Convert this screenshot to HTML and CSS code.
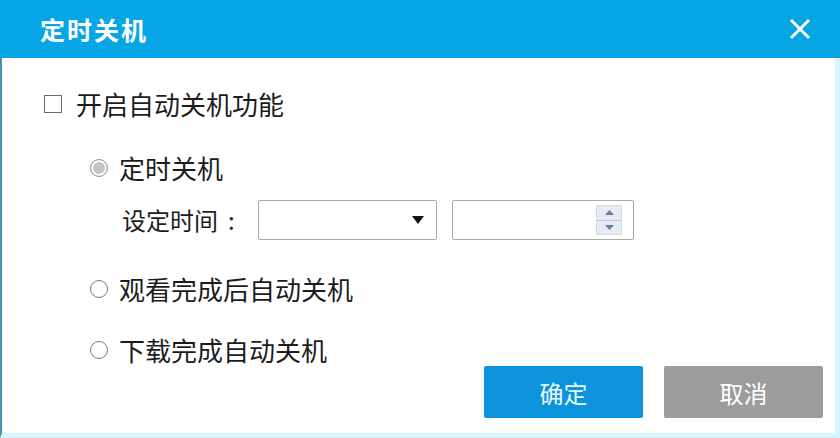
FILE: index.html
```html
<!DOCTYPE html>
<html lang="zh-CN">
<head>
<meta charset="utf-8">
<title>定时关机</title>
<link rel="stylesheet" href="styles.css">
</head>
<body>
<div class="dialog">
  <div class="header">
    <span class="title">定时关机</span>
    <svg class="close" width="24" height="22" viewBox="0 0 24 22"><path d="M3 2 L21 20 M21 2 L3 20" stroke="#fff" stroke-width="3" fill="none"/></svg>
  </div>
  <div class="body">
    <div class="options">
      <label class="row check-row"><span class="checkbox"></span><span>开启自动关机功能</span></label>
      <label class="row radio-row first"><span class="radio checked"></span><span>定时关机</span></label>
      <div class="row time-row">
        <span class="label">设定时间<span class="colon">:</span></span>
        <div class="select"><svg class="caret" width="12" height="8" viewBox="0 0 12 8"><path d="M0 0 H12 L6 8 Z" fill="#111"/></svg></div>
        <div class="spin">
          <div class="spin-btns">
            <div class="spin-btn"><svg width="9" height="5" viewBox="0 0 9 5"><path d="M0 5 H9 L4.5 0 Z" fill="#6c7a94"/></svg></div>
            <div class="spin-btn"><svg width="9" height="5" viewBox="0 0 9 5"><path d="M0 0 H9 L4.5 5 Z" fill="#6c7a94"/></svg></div>
          </div>
        </div>
      </div>
      <label class="row radio-row second"><span class="radio"></span><span>观看完成后自动关机</span></label>
      <label class="row radio-row third"><span class="radio"></span><span>下载完成自动关机</span></label>
    </div>
    <div class="buttons">
      <button class="btn ok">确定</button>
      <button class="btn cancel">取消</button>
    </div>
  </div>
</div>
</body>
</html>
```
FILE: styles.css
```css
html, body {
  margin: 0;
  padding: 0;
  background: #fff;
}
body {
  font-family: "Noto Sans CJK SC", "Noto Sans", sans-serif;
  color: #1c1c1c;
}
.dialog {
  width: 840px;
  height: 438px;
  display: flex;
  flex-direction: column;
  box-sizing: border-box;
  overflow: hidden;
}
.header {
  height: 58px;
  flex: none;
  background: #05a5e6;
  display: flex;
  align-items: center;
  justify-content: space-between;
  padding: 0 28px 0 40px;
}
.title {
  color: #fff;
  font-size: 25px;
  font-weight: bold;
  letter-spacing: 2px;
}
.close {
  display: block;
}
.body {
  flex: 1;
  display: grid;
  grid-template-columns: minmax(0, 1fr) auto;
  border-left: 2px solid #3f98ad;
  border-right: 5px solid #d4f6fc;
  border-bottom: 5px solid #d4f6fc;
  padding: 32px 12px 15px 42px;
  background: #fff;
}
.options {
  display: flex;
  flex-direction: column;
}
.row {
  display: flex;
  align-items: center;
  height: 28px;
  font-size: 26px;
  line-height: 28px;
  white-space: nowrap;
}
.checkbox {
  width: 16px;
  height: 16px;
  border: 1.5px solid #666;
  margin-right: 14px;
  flex: none;
}
.radio-row {
  margin-left: 46px;
}
.radio-row.first { margin-top: 36px; }
.radio-row.second { margin-top: 35px; }
.radio-row.third { margin-top: 33px; }
.radio {
  width: 16px;
  height: 16px;
  border: 1.5px solid #7a7a7a;
  border-radius: 50%;
  margin-right: 11px;
  flex: none;
  box-sizing: content-box;
}
.radio.checked {
  background: #c4c4c4;
  box-shadow: inset 0 0 0 2px #fff;
  border-color: #999;
}
.time-row {
  margin-top: 18px;
  margin-left: 78px;
  height: 40px;
}
.label {
  font-size: 24px;
  width: 136px;
  flex: none;
}
.colon {
  margin-left: 10px;
}
.select {
  width: 179px;
  height: 40px;
  border: 1px solid #a8a8a8;
  border-radius: 2px;
  display: flex;
  align-items: center;
  justify-content: flex-end;
  padding-right: 12px;
  box-sizing: border-box;
  flex: none;
}
.spin {
  margin-left: 15px;
  width: 182px;
  height: 40px;
  border: 1px solid #a8a8a8;
  border-radius: 2px;
  box-sizing: border-box;
  display: flex;
  justify-content: flex-end;
  align-items: center;
  padding-right: 11px;
  flex: none;
}
.spin-btns {
  width: 26px;
  height: 30px;
  display: flex;
  flex-direction: column;
  border: 1px solid #d6dbe4;
  box-sizing: border-box;
}
.spin-btn {
  flex: 1;
  display: flex;
  align-items: center;
  justify-content: center;
  background: #e6eaf2;
}
.spin-btn + .spin-btn {
  border-top: 1px solid #c4cad6;
}
.buttons {
  align-self: end;
  display: flex;
  gap: 21px;
}
.btn {
  width: 159px;
  height: 52px;
  border: none;
  border-radius: 2px;
  font-family: "Noto Sans CJK SC", sans-serif;
  font-size: 24px;
  color: #fff;
  padding: 0;
}
.btn.ok {
  background: #0c93dc;
  color: #e8fbff;
}
.btn.cancel {
  background: #9c9c9c;
}
```
